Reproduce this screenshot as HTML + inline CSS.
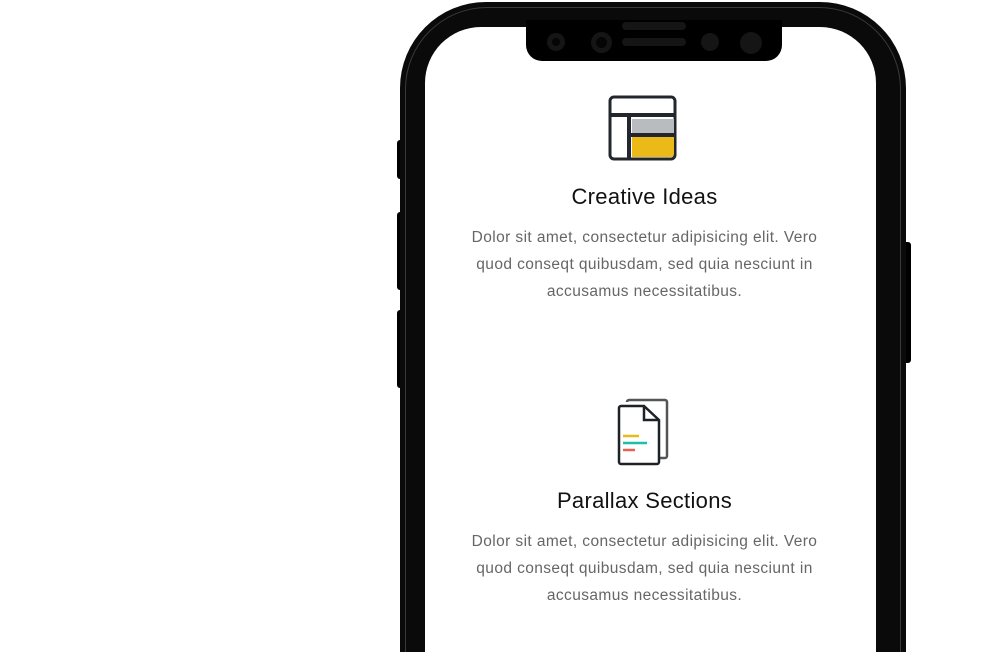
<!DOCTYPE html>
<html><head><meta charset="utf-8"><style>
html,body{margin:0;padding:0;background:#fff;width:1000px;height:652px;overflow:hidden;}
body{position:relative;font-family:"Liberation Sans",sans-serif;}
.abs{position:absolute}
.btn{background:#000;border-radius:3px 0 0 3px}
.phone{left:400px;top:2px;width:506px;height:650px;background:#0a0a0a;border-radius:86px 86px 0 0;}
.rim{left:405px;top:7px;width:496px;height:650px;border:1px solid #3a3a3a;border-bottom:none;border-radius:82px 82px 0 0;box-sizing:border-box;}
.screen{left:425px;top:27px;width:451px;height:625px;background:#fff;border-radius:56px 56px 0 0;}
.notch{left:526px;top:20px;width:256px;height:41px;background:#000;border-radius:0 0 16px 16px;}
.t{left:425px;width:439px;text-align:center;}
h2{margin:0;font-weight:normal;font-size:22px;color:#111;letter-spacing:0.3px}
.p{font-size:15.5px;color:#666;line-height:27px;letter-spacing:0.4px}
</style></head><body>
<div class="abs btn" style="left:397px;top:140px;width:6px;height:39px"></div>
<div class="abs btn" style="left:397px;top:212px;width:6px;height:78px"></div>
<div class="abs btn" style="left:397px;top:310px;width:6px;height:78px"></div>
<div class="abs" style="left:903px;top:242px;width:8px;height:121px;background:#000;border-radius:0 3px 3px 0"></div>
<div class="abs phone"></div>
<div class="abs rim"></div>
<div class="abs screen"></div>
<div class="abs notch"></div>
<div class="abs" style="left:622px;top:22px;width:64px;height:8px;background:#151515;border-radius:4px"></div>
<div class="abs" style="left:622px;top:38px;width:64px;height:8px;background:#151515;border-radius:4px"></div>
<div class="abs" style="left:547px;top:33px;width:18px;height:18px;background:#151515;border-radius:50%"><div class="abs" style="left:5px;top:5px;width:8px;height:8px;border-radius:50%;background:#050505"></div></div>
<div class="abs" style="left:591px;top:32px;width:21px;height:21px;background:#151515;border-radius:50%"><div class="abs" style="left:5px;top:5px;width:11px;height:11px;border-radius:50%;background:#050505"></div></div>
<div class="abs" style="left:701px;top:33px;width:18px;height:18px;background:#151515;border-radius:50%"></div>
<div class="abs" style="left:740px;top:32px;width:22px;height:22px;background:#151515;border-radius:50%"></div>

<svg class="abs" style="left:608px;top:95px" width="70" height="67" viewBox="0 0 70 67">
<rect x="2" y="2" width="65" height="62" rx="4" fill="#fff" stroke="#23272d" stroke-width="3"/>
<rect x="24" y="24" width="42" height="14" fill="#b9bcbf"/>
<path d="M24 42H66V59a3 3 0 0 1-3 3H24z" fill="#ebb918"/>
<path d="M2 20H67M21 20V64M21 40H67" stroke="#23272d" stroke-width="4"/>
</svg>
<div class="abs t" style="top:184px"><h2>Creative Ideas</h2></div>
<div class="abs t p" style="top:224px">Dolor sit amet, consectetur adipisicing elit. Vero<br>quod conseqt quibusdam, sed quia nesciunt in<br>accusamus necessitatibus.</div>

<svg class="abs" style="left:615px;top:398px" width="56" height="70" viewBox="0 0 56 70">
<path d="M12 4a2 2 0 0 1 2-2H50a2 2 0 0 1 2 2V58a2 2 0 0 1-2 2H45" fill="none" stroke="#555" stroke-width="2.5"/>
<path d="M4 10a2 2 0 0 1 2-2H29L44 22V64a2 2 0 0 1-2 2H6a2 2 0 0 1-2-2z" fill="#fff" stroke="#1e2226" stroke-width="2.5"/>
<path d="M29 8V22H44" fill="none" stroke="#1e2226" stroke-width="2.5"/>
<path d="M8 38H24" stroke="#ebb918" stroke-width="2.5"/>
<path d="M8 45H32" stroke="#1ebfa9" stroke-width="2.5"/>
<path d="M8 52H20" stroke="#e8604e" stroke-width="2.5"/>
</svg>
<div class="abs t" style="top:488px"><h2>Parallax Sections</h2></div>
<div class="abs t p" style="top:528px">Dolor sit amet, consectetur adipisicing elit. Vero<br>quod conseqt quibusdam, sed quia nesciunt in<br>accusamus necessitatibus.</div>
</body></html>
